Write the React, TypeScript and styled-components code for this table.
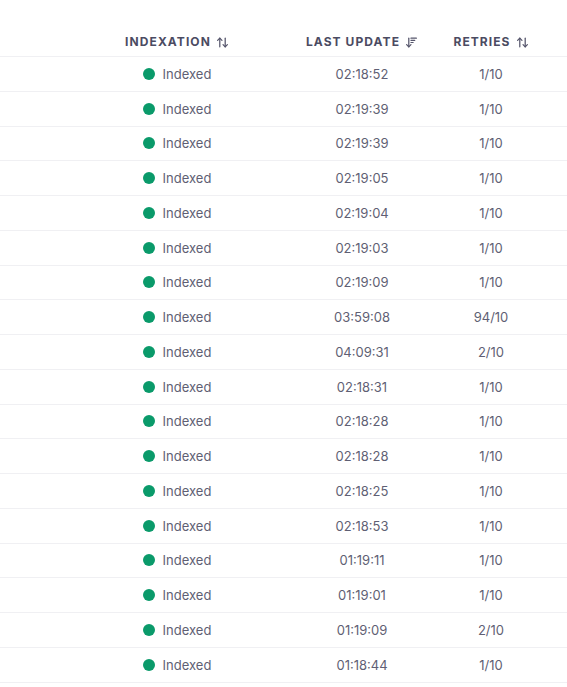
import React from "react";
import styled, { createGlobalStyle } from "styled-components";
import { ArrowUpDown, ArrowDownWideNarrow } from "lucide-react";

const GlobalStyle = createGlobalStyle`
  body {
    margin: 0;
    background: #ffffff;
    font-family: Inter, "Noto Sans", sans-serif;
  }
`;

const Table = styled.div`
  width: 567px;
  overflow: hidden;
`;

const Row = styled.div<{ $head?: boolean }>`
  display: grid;
  grid-template-columns: 74px 206px 164px 94px 1fr;
  align-items: ${(p) => (p.$head ? "end" : "center")};
  height: ${(p) => (p.$head ? "57px" : "34.75px")};
  box-sizing: border-box;
  border-bottom: 1px solid #f0f0f3;
  padding-bottom: ${(p) => (p.$head ? "6px" : "0")};
`;

const HeadCell = styled.div`
  display: flex;
  align-items: center;
  justify-content: center;
  gap: 5px;
  font-size: 12px;
  line-height: 16px;
  font-weight: 700;
  letter-spacing: 0.09em;
  color: #4b4b62;
  text-transform: uppercase;
  white-space: nowrap;
  svg {
    color: #55556b;
  }
`;

const Cell = styled.div`
  display: flex;
  align-items: center;
  justify-content: center;
  font-size: 13px;
  color: #5f5f74;
  white-space: nowrap;
`;

const Dot = styled.span`
  width: 12px;
  height: 12px;
  border-radius: 50%;
  background: #0a9a6a;
  margin-right: 8px;
`;

const rows: [string, string][] = [
  ["02:18:52", "1/10"],
  ["02:19:39", "1/10"],
  ["02:19:39", "1/10"],
  ["02:19:05", "1/10"],
  ["02:19:04", "1/10"],
  ["02:19:03", "1/10"],
  ["02:19:09", "1/10"],
  ["03:59:08", "94/10"],
  ["04:09:31", "2/10"],
  ["02:18:31", "1/10"],
  ["02:18:28", "1/10"],
  ["02:18:28", "1/10"],
  ["02:18:25", "1/10"],
  ["02:18:53", "1/10"],
  ["01:19:11", "1/10"],
  ["01:19:01", "1/10"],
  ["01:19:09", "2/10"],
  ["01:18:44", "1/10"],
];

const App = () => {
  return (
    <>
      <GlobalStyle />
      <Table>
        <Row $head>
          <div />
          <HeadCell>
            Indexation <ArrowUpDown size={13} strokeWidth={2.3} />
          </HeadCell>
          <HeadCell>
            Last update <ArrowDownWideNarrow size={13} strokeWidth={2.3} />
          </HeadCell>
          <HeadCell>
            Retries <ArrowUpDown size={13} strokeWidth={2.3} />
          </HeadCell>
          <div />
        </Row>
        {rows.map(([time, retries], idx) => (
          <Row key={idx}>
            <div />
            <Cell>
              <Dot />
              Indexed
            </Cell>
            <Cell>{time}</Cell>
            <Cell>{retries}</Cell>
            <div />
          </Row>
        ))}
      </Table>
    </>
  );
};

export default App;
